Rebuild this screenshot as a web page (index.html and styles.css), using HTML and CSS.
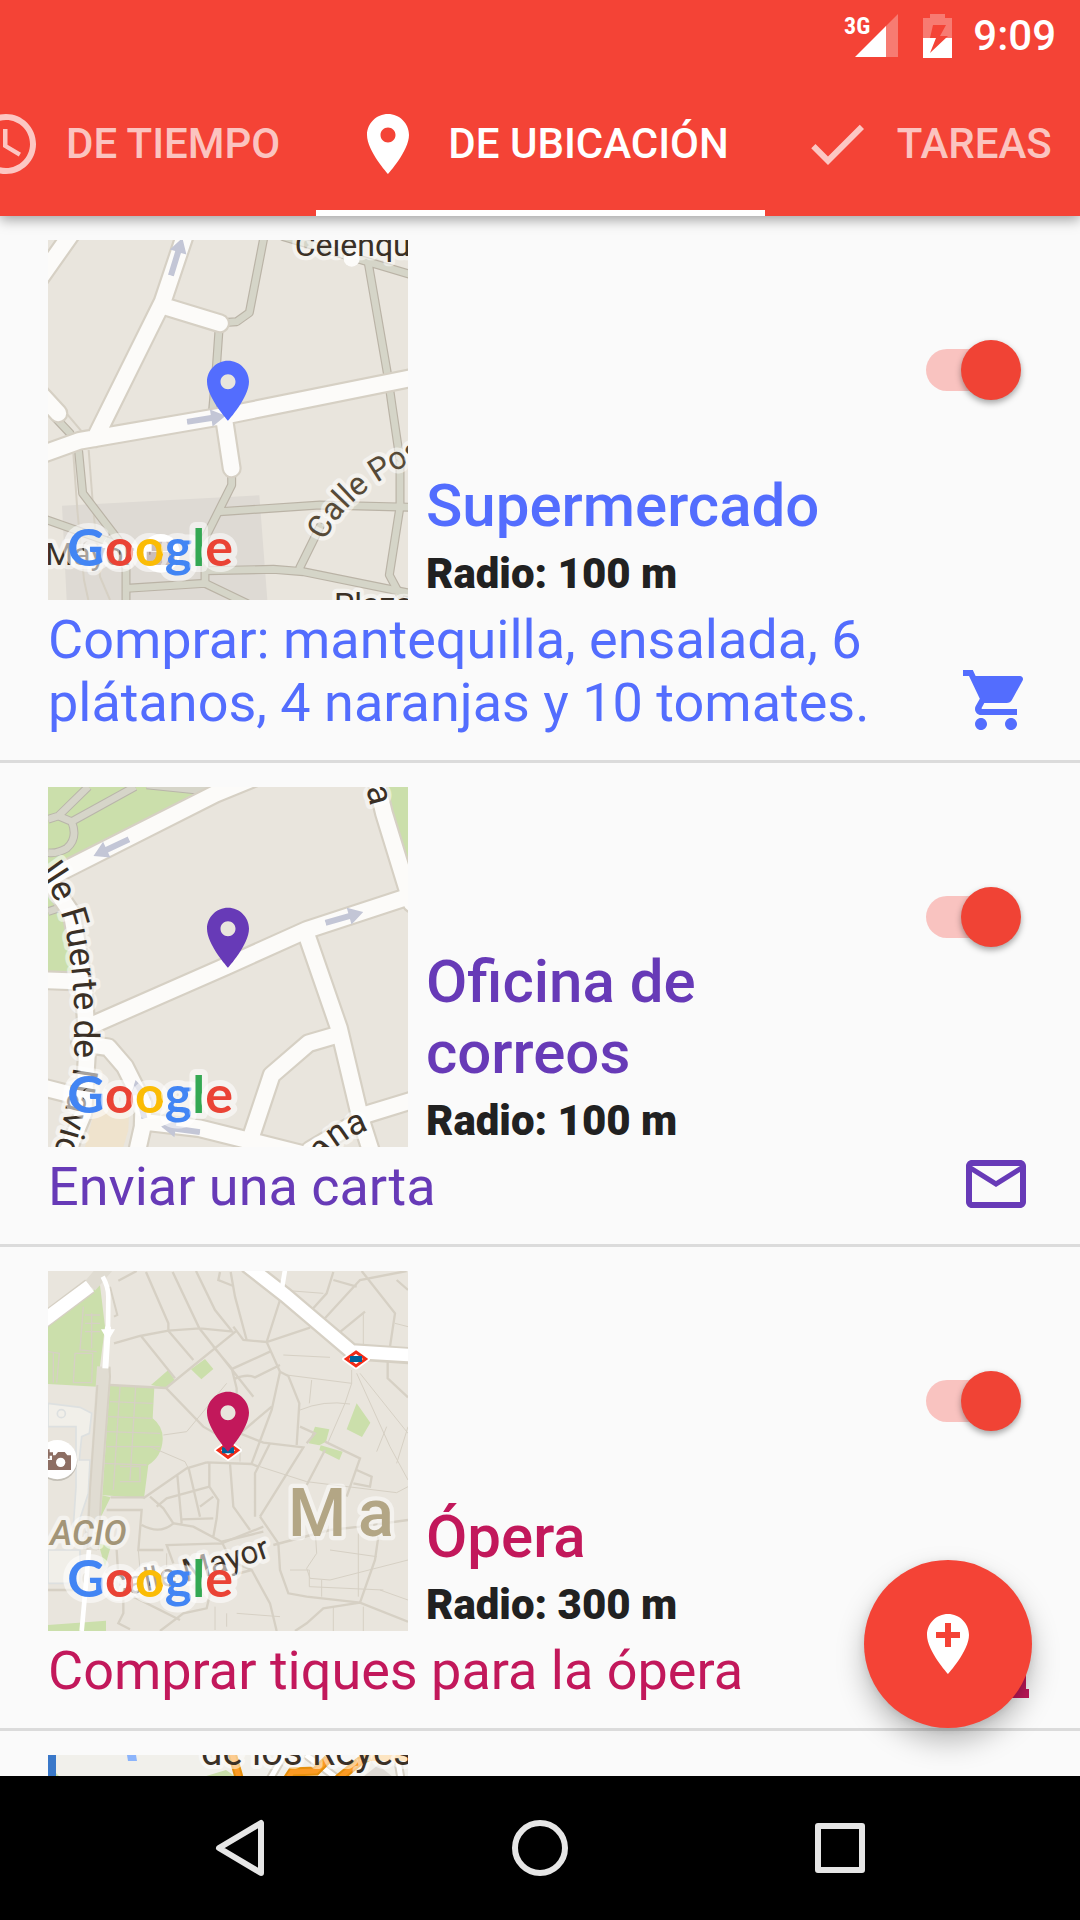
FILE: index.html
```html
<!DOCTYPE html>
<html lang="es">
<head>
    <meta charset="UTF-8">
    <meta name="viewport" content="width=device-width, initial-scale=1.0">
    <title>Recordatorios</title>
    <link rel="stylesheet" href="styles.css">
</head>
<body>

<!-- shared shapes -->
<svg class="defs" aria-hidden="true">
    <symbol id="pin" viewBox="0 0 24 24">
        <path d="M12 2C8.13 2 5 5.13 5 9c0 5.25 7 13 7 13s7-7.75 7-13c0-3.87-3.13-7-7-7zm0 9.5c-1.38 0-2.5-1.12-2.5-2.5s1.12-2.5 2.5-2.5 2.5 1.12 2.5 2.5-1.12 2.5-2.5 2.5z"/>
    </symbol>
    <symbol id="arrow" viewBox="0 0 120 60">
        <path d="M0 21h74V4l44 26-44 26V39H0z"/>
    </symbol>
    <symbol id="metro" viewBox="0 0 90 64">
        <path fill="#fff" stroke="#fff" stroke-width="12" stroke-linejoin="round" d="M45 6l36 26-36 26L9 32z"/>
        <path fill="#fff" stroke="#f22b17" stroke-width="9" d="M45 11l29 21-29 21-29-21z"/>
        <path fill="#00629b" d="M27 23h36v18H27z"/>
    </symbol>
</svg>

<header class="appbar">
    <div class="status">
        <svg class="signal" viewBox="0 0 56 46" aria-hidden="true">
            <path fill="#fff" fill-opacity=".3" d="M54 1v43H41V14z"/>
            <path fill="#fff" d="M42 13v31H11z"/>
            <text x="0" y="21">3G</text>
        </svg>
        <svg class="battery" viewBox="0 0 29 44" aria-hidden="true">
            <path fill="#fff" fill-opacity=".3" d="M7 0h15v4h7v20H0V4h7z"/>
            <path fill="#fff" d="M0 24h29v20H0z"/>
            <path fill="#f44336" d="M10 11h13l-6 11h8L7 39l6-15H7z"/>
        </svg>
        <span class="clock">9:09</span>
    </div>
    <nav class="tabs">
        <button class="tab">
            <svg class="icon" viewBox="0 0 24 24"><path d="M11.99 2C6.47 2 2 6.48 2 12s4.47 10 9.99 10C17.52 22 22 17.52 22 12S17.52 2 11.99 2zM12 20c-4.42 0-8-3.58-8-8s3.58-8 8-8 8 3.58 8 8-3.58 8-8 8zm.5-13H11v6l5.25 3.15.75-1.23-4.5-2.67z"/></svg>
            DE TIEMPO
        </button>
        <button class="tab active">
            <svg class="icon" viewBox="0 0 24 24"><use href="#pin"/></svg>
            DE UBICACIÓN
        </button>
        <button class="tab">
            <svg class="icon" viewBox="0 0 24 24"><path d="M9 16.17L4.83 12l-1.42 1.41L9 19 21 7l-1.41-1.41z"/></svg>
            TAREAS
        </button>
    </nav>
</header>

<main class="content">
    <ul class="list">
        <li class="item blue">
            <div class="top">
                <svg class="map" viewBox="24 30 1080 1080">
                    <defs>
                        <g id="paths1">
                            <path d="M672 20L628 248 590 275 565 277M537 300L530 400 518 540M985 100L1043 435 1055 520 1080 690 1080 830 1048 1035 1080 1095M730 20L1120 136"/>
                            <path d="M10 525L90 610 116 665 128 790 235 930 258 1010 258 1120M10 866L235 945M575 735V765L495 925V1055M540 845L840 825 1120 832"/>
                            <path d="M260 1075L495 1060 620 1120M500 1022L700 1018 790 1025 1120 1092M840 890L780 1012"/>
                        </g>
                        <g id="roads1">
                            <path d="M440 0L368 215 165 625M370 228L540 280M0 675L120 632 550 558 1120 443M0 145L95 10M0 490L55 550M553 570L575 715"/>
                        </g>
                    </defs>
                    <rect class="land" x="24" y="30" width="1080" height="1080"/>
                    <path fill="#dedad4" d="M66 827L658 796 682 1110H80z"/>
                    <path class="edge" d="M100 670L112 840 132 1050 145 1110M146 660L160 840 180 1040 210 1110M75 545L130 610"/>
                    <use href="#paths1" class="path-case"/>
                    <use href="#paths1" class="path-fill"/>
                    <use href="#roads1" class="road-case"/>
                    <use href="#roads1" class="road-fill"/>
                    <use href="#arrow" class="arrow" width="120" height="60" transform="translate(364 128) rotate(-73)"/>
                    <use href="#arrow" class="arrow" width="120" height="60" transform="translate(436 546) rotate(-9)"/>
                    <circle cx="935" cy="86" r="24" fill="#fcfbf9"/>
                    <circle cx="362" cy="970" r="58" fill="#fff"/>
                    <path fill="#8d6e63" d="M335 935h54v28h-54zM320 965h84v40h-84z"/>
                    <path id="posta" fill="none" d="M856 934Q920 780 1180 668"/>
                    <text class="label" x="764" y="79">Celenque</text>
                    <text class="label brown"><textPath href="#posta">Calle Postas</textPath></text>
                    <text class="label" x="16" y="1005">Mayor</text>
                    <text class="label" x="882" y="1156">Plaza</text>
                    <text class="google" x="82" y="1008"><tspan class="g1">G</tspan><tspan class="g2">o</tspan><tspan class="g3">o</tspan><tspan class="g1">g</tspan><tspan class="g4">l</tspan><tspan class="g2">e</tspan></text>
                    <use href="#pin" class="marker" x="456" y="374" width="216" height="216"/>
                </svg>
                <div class="info">
                    <h2 class="title">Supermercado</h2>
                    <p class="radius">Radio: 100 m</p>
                </div>
                <input type="checkbox" class="switch" aria-label="Activar Supermercado" checked>
            </div>
            <div class="bottom">
                <p class="desc">Comprar: mantequilla, ensalada, 6 plátanos, 4 naranjas y 10 tomates.</p>
                <svg class="icon" viewBox="0 0 24 24"><path d="M7 18c-1.1 0-1.99.9-1.99 2S5.9 22 7 22s2-.9 2-2-.9-2-2-2zM1 2v2h2l3.6 7.59-1.35 2.45c-.16.28-.25.61-.25.96 0 1.1.9 2 2 2h12v-2H7.42c-.14 0-.25-.11-.25-.25l.03-.12.9-1.63h7.45c.75 0 1.41-.41 1.75-1.03l3.58-6.49c.08-.14.12-.31.12-.48 0-.55-.45-1-1-1H5.21l-.94-2H1zm16 16c-1.1 0-1.99.9-1.99 2s.89 2 1.99 2 2-.9 2-2-.9-2-2-2z"/></svg>
            </div>
        </li>

        <li class="item purple">
            <div class="top">
                <svg class="map" viewBox="24 21 1080 1080">
                    <defs>
                        <g id="roads2">
                            <path d="M0 312L70 272 525 42 640 -5M1008 0L1032 100 1115 370M150 738L560 558 800 450 1120 345"/>
                            <path d="M800 465L897 745 960 1010 995 1120M890 765L805 790 695 885 630 1080M980 1003L1120 960M970 1015L810 1110"/>
                            <path d="M120 790L205 802 255 860 310 970 308 1040 290 1120M310 1025L480 1045 780 1120"/>
                            <path d="M20 290L95 400 130 600 142 800 130 1000 80 1120M0 600L130 605M0 920L110 948"/>
                        </g>
                    </defs>
                    <rect class="land" x="24" y="21" width="1080" height="1080"/>
                    <path class="park" d="M24 21H520L24 280zM24 330L95 470V573H24zM1030 21H1104V260z"/>
                    <path fill="none" stroke="#b9b5aa" stroke-width="26" d="M24 118L55 108 145 20M55 108L95 125 285 20M95 125Q115 175 80 205 50 222 24 218M320 15L470 30 500 15M24 395L70 380"/>
                    <path fill="none" stroke="#d6d5c9" stroke-width="20" d="M24 118L55 108 145 20M55 108L95 125 285 20M95 125Q115 175 80 205 50 222 24 218M320 15L470 30 500 15M24 395L70 380"/>
                    <use href="#roads2" class="road-case"/>
                    <use href="#roads2" class="road-fill"/>
                    <path fill="#efe3cd" d="M165 985L268 985 265 1050 250 1101H135z"/>
                    <use href="#arrow" class="arrow" width="120" height="60" transform="translate(280 205) rotate(155)"/>
                    <use href="#arrow" class="arrow" width="120" height="60" transform="translate(848 400) rotate(-16)"/>
                    <use href="#arrow" class="arrow" width="120" height="60" transform="translate(476 1086) rotate(188)"/>
                    <use href="#arrow" class="arrow" width="120" height="60" transform="translate(284 1022) rotate(-103)"/>
                    <path id="fuerte" fill="none" d="M-5 278Q50 350 72 430 100 560 103 700V830Q98 900 80 970 65 1060 10 1200"/>
                    <path id="ana" fill="none" d="M850 1150Q900 1065 1040 1036"/>
                    <text class="label wide"><textPath href="#fuerte">lle Fuerte de Navic</textPath></text>
                    <text class="label wide" transform="translate(978 24) rotate(76)">a</text>
                    <text class="label wide"><textPath href="#ana">ana</textPath></text>
                    <text class="google" x="82" y="999"><tspan class="g1">G</tspan><tspan class="g2">o</tspan><tspan class="g3">o</tspan><tspan class="g1">g</tspan><tspan class="g4">l</tspan><tspan class="g2">e</tspan></text>
                    <use href="#pin" class="marker" x="456" y="365" width="216" height="216"/>
                </svg>
                <div class="info">
                    <h2 class="title">Oficina de correos</h2>
                    <p class="radius">Radio: 100 m</p>
                </div>
                <input type="checkbox" class="switch" aria-label="Activar Oficina de correos" checked>
            </div>
            <div class="bottom">
                <p class="desc">Enviar una carta</p>
                <svg class="icon" viewBox="0 0 24 24"><path d="M20 4H4c-1.1 0-2 .9-2 2v12c0 1.1.9 2 2 2h16c1.1 0 2-.9 2-2V6c0-1.1-.9-2-2-2zm0 14H4V8l8 5 8-5v10zm-8-7L4 6h16l-8 5z"/></svg>
            </div>
        </li>

        <li class="item pink">
            <div class="top">
                <svg class="map" viewBox="24 33 1080 1080">
                    <rect class="land" x="24" y="33" width="1080" height="1080"/>
                    <path class="park" d="M24 190L180 75 195 200 172 380 24 372zM210 375L343 382 338 475Q370 500 368 540 365 590 325 615L312 715 183 705zM333 375L385 330 405 362 378 384zM453 328L495 297 520 327 484 358zM950 430L991 488 966 531 920 508zM825 500L868 508 858 545 838 556 806 550zM842 556L908 575 898 600 838 570zM183 705L212 712 178 780zM24 1095L198 1082V1113H24zM175 850L212 860 195 920z"/>
                    <path fill="none" stroke="#d6d0c4" stroke-width="4" d="M130 140L120 270 170 275M135 165H180M135 190H180M135 215H180M155 160V265M105 280H158L155 368H100zM24 275L58 280 50 368M40 278V368M210 425L338 430M205 470L335 475M200 515L360 520M200 560L360 560M190 610L320 615M240 380L220 690M287 380L270 660M240 620H300V665H240M60 130L190 60"/>
                    <path fill="#f1efe9" stroke="#dde0e0" stroke-width="5" d="M24 430L120 442 155 460 148 520 125 530 118 600 150 600 145 700 112 800H100L108 680 108 500H24zM24 870L120 870V970H24z"/>
                    <circle cx="64" cy="461" r="12" fill="none" stroke="#dde0e0" stroke-width="5"/>
                    <g class="lane">
                        <path d="M318 36L385 190V212M398 36L478 205 640 410M468 33L525 150 575 212M572 36L585 110 620 240M235 62L290 33M222 250L300 228 385 212 480 205 580 215M580 200L610 240 680 246 810 203M305 230L405 355M385 212L460 300M590 212L378 384M210 375L378 384 490 500 560 540M720 120L680 246 720 335M690 275L580 325 575 330M720 315L645 352Q620 340 580 358M520 260L575 325 590 385 590 430"/>
                        <path d="M720 335L695 450 635 610M720 335L745 348 778 430 770 555M695 440L600 520M600 520L670 548 790 562 660 770M690 550L645 640V770M500 607L635 612 655 620M500 607L440 625 310 715M508 607V680L535 720 530 775 520 830M445 620L480 770M412 645L425 790M330 710L370 745 400 790M570 610L580 740 630 810M508 680L380 715 350 740M425 778L520 775M480 740L520 710M200 750H305L295 870 370 870M212 712H310M305 795Q360 825 400 790L460 800 545 845 670 815"/>
                        <path d="M545 845L575 905 635 930 690 1030 710 1113M660 770L715 850 720 930 745 1000 800 1010 960 1028 1104 1085M670 800L545 850 380 855 400 910M250 1010V1060L235 1090 270 1108M280 1010L420 1080M360 1113L430 1060 500 1045 520 960 635 930M960 1028L1005 900 1015 830M960 1028L850 1045 800 1090 765 1113M700 855L870 810 960 800 1104 780M780 500L825 520 800 550M855 545L960 595 920 710M950 630L995 650 990 680 940 670M855 570L800 675M230 870L235 950 300 1010M24 990H130"/>
                        <path d="M880 60L950 80M815 150L860 100 880 36M850 180L960 60 1100 33M895 220L975 155M965 33L1065 160 1050 260M1070 60L1104 90M1043 300V355L1104 412M540 36L535 60 580 78"/>
                    </g>
                    <g class="alley">
                        <path d="M720 90L850 100M730 285L870 292M740 345L935 370M935 330V370L915 430 865 545M950 340L1050 560 1104 660M960 340L1104 520M780 450Q850 420 930 432M815 360L808 430M1104 500L1070 610M370 525L440 515 560 370M330 560L435 605 445 625M660 620L800 665 1070 698 1104 680M825 800L830 880 800 925 810 955 870 960 1104 900M750 930H808V980L1030 990M955 820V1010M870 870L1010 890M845 960V1010M880 1040V1113M970 1040V1113M1020 990L1104 1020M560 1060V1100M590 1060L720 1070M525 1040V1110M600 560V605M295 870L300 930M380 880V920M1065 190L1104 200M970 160V260M1010 575L1040 500"/>
                    </g>
                    <path fill="none" stroke="#e0dcd2" stroke-width="42" d="M200 20L150 78M192 320L162 770 150 870"/>
                    <path fill="none" stroke="#d6d0c4" stroke-width="6" d="M208 320L210 350 183 705 175 870M172 375L150 690 142 870M210 80L232 165 222 170"/>
                    <g fill="none" stroke="#d6d0c4">
                        <path stroke-width="52" d="M620 15L735 105 935 275 1120 288"/>
                        <path stroke-width="48" d="M0 190L150 78"/>
                    </g>
                    <g fill="none" stroke="#fff">
                        <path stroke-width="40" d="M0 190L150 78"/>
                        <path stroke-width="38" d="M620 15L735 105 935 275 1120 286"/>
                        <path stroke-width="14" d="M735 30L725 90M188 50Q205 80 205 110L204 210M147 870L125 1113"/>
                        <path stroke-width="18" d="M204 200L196 325"/>
                        <path stroke-width="8" fill="#fff" d="M190 212L218 212 204 235z"/>
                    </g>
                    <circle cx="52" cy="603" r="60" fill="#c4c0b7"/>
                    <circle cx="52" cy="599" r="59" fill="#fff"/>
                    <path fill="#8d6e63" d="M24 600h12v-14h10l8-10h20l8 10h11v44H24zM24 568h5v9h10v10H29v9h-5z"/>
                    <circle cx="62" cy="607" r="14" fill="#fff"/>
                    <use href="#metro" x="903" y="265" width="90" height="64"/>
                    <use href="#metro" x="519" y="539" width="90" height="64"/>
                    <path id="mayor" fill="none" d="M206 1014Q460 975 750 870"/>
                    <text class="label area" x="30" y="855">ACIO</text>
                    <text class="label city" x="744" y="828">M</text>
                    <text class="label city" x="954" y="828">a</text>
                    <text class="label"><textPath href="#mayor">Calle Mayor</textPath></text>
                    <text class="google" x="82" y="1011"><tspan class="g1">G</tspan><tspan class="g2">o</tspan><tspan class="g3">o</tspan><tspan class="g1">g</tspan><tspan class="g4">l</tspan><tspan class="g2">e</tspan></text>
                    <use href="#pin" class="marker" x="456" y="377" width="216" height="216"/>
                </svg>
                <div class="info">
                    <h2 class="title">Ópera</h2>
                    <p class="radius">Radio: 300 m</p>
                </div>
                <input type="checkbox" class="switch" aria-label="Activar Ópera" checked>
            </div>
            <div class="bottom">
                <p class="desc">Comprar tiques para la ópera</p>
                <svg class="icon" viewBox="0 0 24 24"><path d="M3 14h19v5h1v3H1v-3h2z"/></svg>
            </div>
        </li>

        <li class="item">
            <div class="top">
                <svg class="map" viewBox="0 0 360 360">
                    <rect width="360" height="360" fill="#f1f0eb"/>
                    <path fill="#3a78c9" d="M0 0h8v360H0z"/>
                    <path fill="#8cb4fb" d="M79 0h9l1 6H80z"/>
                    <path class="park" d="M155 22L178 15 188 22zM8 18L12 22H8z"/>
                    <path fill="#dedad4" d="M315 22L330 10 345 22z"/>
                    <path fill="none" stroke="#d6d0c4" stroke-width="9" d="M222 24L236 0M258 0L290 24M349 0L353 24"/>
                    <path fill="none" stroke="#fff" stroke-width="5" d="M222 24L236 0M258 0L290 24M349 0L353 24"/>
                    <path fill="none" stroke="#e58f0c" stroke-width="9" d="M184 -2L192 26M238 26L244 17 268 16 280 4M290 24L312 6 324 0"/>
                    <path fill="none" stroke="#fb9a24" stroke-width="5" d="M184 -2L192 26M238 26L244 17 268 16 280 4M290 24L312 6 324 0"/>
                    <path fill="#fccb86" d="M318 0h42v6h-48z"/>
                    <text class="label tiny" x="153" y="10">de los Reyes</text>
                </svg>
            </div>
        </li>
    </ul>

    <button class="fab" aria-label="Añadir ubicación">
        <svg class="icon" viewBox="0 0 24 24"><path d="M12 2C8.14 2 5 5.14 5 9c0 5.25 7 13 7 13s7-7.75 7-13c0-3.86-3.14-7-7-7zm4 8h-3v3h-2v-3H8V8h3V5h2v3h3v2z"/></svg>
    </button>
</main>

<footer class="navbar">
    <button aria-label="Atrás"><svg viewBox="0 0 60 60"><path d="M51 5v50L9 30z"/></svg></button>
    <button aria-label="Inicio"><svg viewBox="0 0 60 60"><circle cx="30" cy="30" r="25"/></svg></button>
    <button aria-label="Recientes"><svg viewBox="0 0 60 60"><path d="M8 8h44v44H8z"/></svg></button>
</footer>

</body>
</html>
```
FILE: styles.css
```css
* {
    box-sizing: border-box;
}
body {
    margin: 0;
    height: 100vh;
    display: flex;
    flex-direction: column;
    overflow: hidden;
    background-color: #fafafa;
    font-family: Roboto, sans-serif;
}
h2, p, ul {
    margin: 0;
    padding: 0;
}
button {
    border: 0;
    padding: 0;
    background: none;
    font-family: inherit;
}
.defs {
    position: absolute;
    width: 0;
    height: 0;
}
.icon {
    width: 72px;
    height: 72px;
    flex: none;
    fill: currentColor;
}

/* app bar */
.appbar {
    position: relative;
    z-index: 1;
    background-color: #f44336;
    color: #fff;
    box-shadow: 0 4px 12px rgba(0, 0, 0, 0.35);
}
.status {
    height: 72px;
    padding-right: 24px;
    display: flex;
    justify-content: flex-end;
    align-items: center;
}
.signal {
    width: 56px;
    height: 46px;
}
.signal text {
    fill: #fff;
    font-family: "Roboto Condensed", Roboto, sans-serif;
    font-size: 24px;
    font-weight: 700;
}
.battery {
    width: 29px;
    height: 44px;
    margin: 0 21px 0 23px;
}
.clock {
    font-size: 42px;
    font-weight: 500;
    line-height: 52px;
}
.tabs {
    display: flex;
    height: 144px;
    margin-left: -66px;
    overflow: hidden;
}
.tab {
    flex: none;
    display: flex;
    align-items: center;
    gap: 24px;
    padding: 6px 36px 0;
    border-bottom: 6px solid transparent;
    color: rgba(255, 255, 255, 0.7);
    font-size: 42px;
    font-weight: 500;
    line-height: 52px;
}
.tab.active {
    color: #fff;
    border-bottom-color: #fff;
}

/* reminders */
.content {
    position: relative;
    flex: 1;
    min-height: 0;
}
.list {
    height: 100%;
    overflow: hidden;
    list-style: none;
}
.item {
    padding: 24px 48px;
    border-bottom: 3px solid #dbdbdb;
}
.blue {
    color: #536dfe;
}
.purple {
    color: #673ab7;
}
.pink {
    color: #c2185b;
}
.top {
    display: flex;
}
.map {
    width: 360px;
    height: 360px;
    flex: none;
}
.info {
    flex: 1;
    align-self: flex-end;
    margin-left: 18px;
}
.title {
    margin-bottom: 7px;
    font-size: 60px;
    font-weight: 500;
    line-height: 71px;
}
.radius {
    color: #212121;
    font-size: 42px;
    font-weight: 900;
    line-height: 52px;
}
.bottom {
    display: flex;
    justify-content: space-between;
    align-items: flex-end;
}
.desc {
    padding: 8px 48px 2px 0;
    font-size: 54px;
    line-height: 63px;
}

/* switch */
.switch {
    appearance: none;
    display: flex;
    align-items: center;
    width: 96px;
    height: 60px;
    margin: 100px 10px 0 48px;
    flex: none;
}
.switch::before {
    content: "";
    width: 80px;
    height: 42px;
    flex: none;
    border-radius: 21px;
    background-color: #f9c3c0;
}
.switch::after {
    content: "";
    width: 60px;
    height: 60px;
    margin-left: -45px;
    flex: none;
    border-radius: 50%;
    background-color: #f04335;
    box-shadow: 0 3px 6px rgba(0, 0, 0, 0.35);
}

.fab {
    position: absolute;
    right: 48px;
    bottom: 48px;
    width: 168px;
    height: 168px;
    border-radius: 50%;
    background-color: #f44336;
    color: #fff;
    display: flex;
    justify-content: center;
    align-items: center;
    box-shadow: 0 14px 28px rgba(0, 0, 0, 0.25), 0 2px 8px rgba(0, 0, 0, 0.1);
}

/* maps */
.land {
    fill: #e9e5dd;
}
.park {
    fill: #cbdfab;
}
.edge {
    fill: none;
    stroke: #d6d0c4;
    stroke-width: 6px;
}
.road-case, .road-fill, .path-case, .path-fill {
    fill: none;
    stroke-linecap: round;
    stroke-linejoin: round;
}
.road-case {
    stroke: #d6d0c4;
    stroke-width: 60px;
}
.road-fill {
    stroke: #fcfbf9;
    stroke-width: 47px;
}
.path-case {
    stroke: #bab3a6;
    stroke-width: 27px;
}
.path-fill {
    stroke: #d5d5c8;
    stroke-width: 20px;
}
.lane {
    fill: none;
    stroke: #d6d0c4;
    stroke-width: 7px;
}
.alley {
    fill: none;
    stroke: #d6d0c4;
    stroke-width: 3px;
}
.arrow {
    fill: #c3c6d6;
}
.marker {
    fill: currentColor;
}
.label {
    fill: #3a3026;
    stroke: rgba(255, 255, 255, 0.5);
    stroke-width: 26px;
    stroke-linejoin: round;
    paint-order: stroke;
    font-size: 96px;
}
.label.wide {
    font-size: 106px;
}
.label.brown {
    fill: #564a38;
}
.label.tiny {
    font-size: 38px;
    stroke-width: 8px;
}
.label.area {
    fill: #a39577;
    font-size: 104px;
    font-style: italic;
    font-weight: 500;
}
.label.city {
    fill: #b3a685;
    font-size: 200px;
    font-weight: 500;
}
.google {
    font-family: Lato, sans-serif;
    font-size: 156px;
    font-weight: 700;
    stroke: rgba(255, 255, 255, 0.55);
    stroke-width: 36px;
    stroke-linejoin: round;
    paint-order: stroke;
}
.g1 {
    fill: #4285f4;
}
.g2 {
    fill: #ea4335;
}
.g3 {
    fill: #fbbc05;
}
.g4 {
    fill: #34a853;
}

/* system buttons */
.navbar {
    height: 144px;
    padding: 0 90px;
    flex: none;
    display: grid;
    grid-template-columns: repeat(3, 1fr);
    justify-items: center;
    align-items: center;
    background-color: #000;
}
.navbar svg {
    display: block;
    width: 60px;
    height: 60px;
    fill: none;
    stroke: #e6e6e6;
    stroke-width: 6px;
    stroke-linejoin: round;
}
```
